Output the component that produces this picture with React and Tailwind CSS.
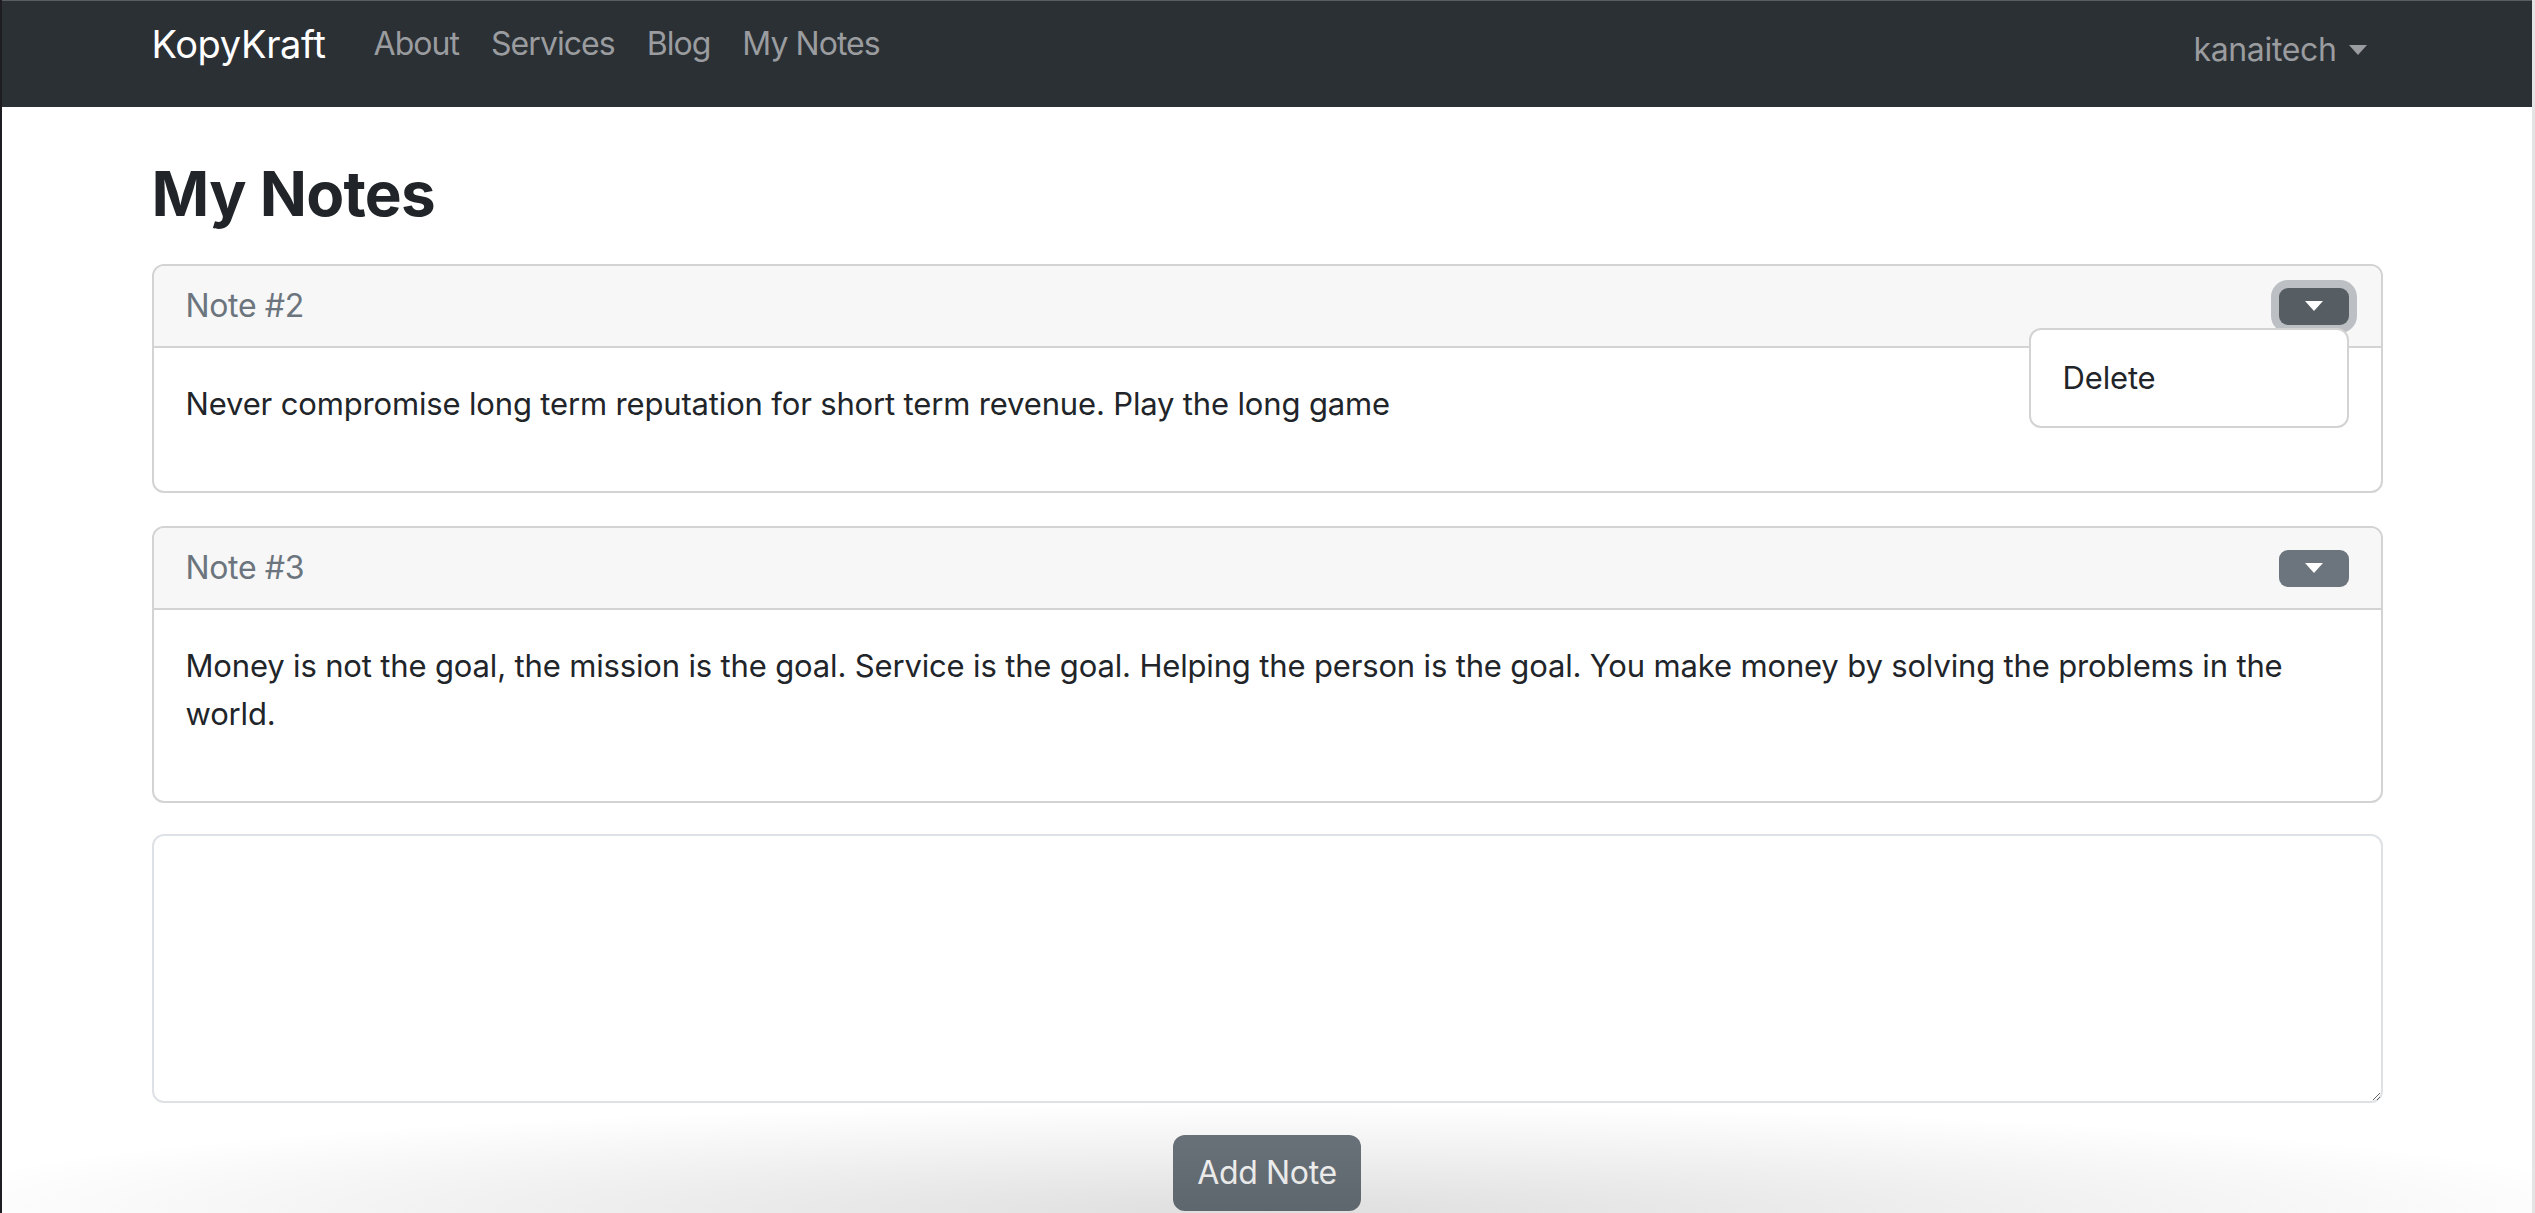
import { useState } from "react";

const notes = [
  {
    id: 2,
    text: "Never compromise long term reputation for short term revenue. Play the long game",
    open: true,
  },
  {
    id: 3,
    text: "Money is not the goal, the mission is the goal. Service is the goal. Helping the person is the goal. You make money by solving the problems in the world.",
    open: false,
  },
];

const Caret = ({ className }) => (
  <span
    className={`inline-block w-0 h-0 border-t-[10px] border-x-[9px] border-x-transparent ${className}`}
  />
);

const NoteCard = ({ note }) => {
  return (
    <div className="relative border-2 border-[#d3d3d3] rounded-[12px] bg-white">
      <div className="flex items-center justify-between h-[82px] px-[32px] bg-[#f7f7f7] border-b-2 border-[#d3d3d3] rounded-t-[10px]">
        <span className="text-[32px] leading-[48px] text-[#6c757d]">Note #{note.id}</span>
        <button
          className={`flex items-center justify-center w-[70px] h-[37px] rounded-[9px] ${
            note.open
              ? "bg-[#565e64] shadow-[0_0_0_8px_rgba(130,138,145,0.5)]"
              : "bg-[#6c757d]"
          }`}
        >
          <Caret className="border-t-white" />
        </button>
      </div>
      <div className="px-[32px] pt-[32px] pb-[63px]">
        <p className="text-[31px] leading-[48px] tracking-[-0.005em] text-[#212529]">{note.text}</p>
      </div>
      {note.open && (
        <div className="absolute right-[32px] top-[62px] w-[320px] bg-white border-2 border-[#d3d3d3] rounded-[12px] py-[16px] z-10">
          <div className="px-[32px] py-[8px] text-[31px] leading-[48px] tracking-[-0.005em] text-[#212529]">Delete</div>
        </div>
      )}
    </div>
  );
};

const App = () => {
  const [draft, setDraft] = useState("");

  return (
    <div className="relative h-[1213px] overflow-hidden bg-white border-l-2 border-[#1e1e22] border-r-[3px] border-r-[#e4e4e4] tracking-[-0.022em] font-['Inter','Liberation_Sans',sans-serif]">
      <nav className="h-[107px] bg-[#2b3035] border-t border-[#5a5d60]">
        <div className="w-[2231px] mx-auto flex justify-between">
          <div className="flex items-start">
            <span className="mt-[14px] text-[38px] leading-[58px] text-white mr-[32px]">KopyKraft</span>
            {["About", "Services", "Blog", "My Notes"].map((link) => (
              <a
                key={link}
                className="mt-[19px] px-[16px] text-[32px] leading-[48px] tracking-[-0.03em] text-[#9a9c9f]"
              >
                {link}
              </a>
            ))}
          </div>
          <div className="flex items-center mt-[25px] h-[48px] px-[16px] text-[32px] leading-[48px] text-[#9a9c9f]">
            kanaitech
            <Caret className="ml-[12px] border-t-[#9a9c9f]" />
          </div>
        </div>
      </nav>

      <main className="w-[2231px] mx-auto">
        <h1 className="mt-[49px] mb-[32px] text-[62px] leading-[76px] font-bold tracking-[-0.012em] text-[#212529]">My Notes</h1>

        <div className="flex flex-col gap-[33px]">
          {notes.map((note) => (
            <NoteCard key={note.id} note={note} />
          ))}
        </div>

        <textarea
          rows={5}
          value={draft}
          onChange={(e) => setDraft(e.target.value)}
          className="block w-full mt-[31px] h-[269px] border-2 border-[#dee2e6] rounded-[12px] px-[24px] py-[12px] text-[32px] leading-[48px] outline-none resize-y"
        />

        <div className="flex justify-center mt-[32px]">
          <button className="h-[76px] px-[24px] rounded-[12px] bg-[#6c757d] text-white text-[32px] leading-[48px]">
            Add Note
          </button>
        </div>
      </main>

      {/* window shadow at the bottom of the capture */}
      <div className="pointer-events-none absolute left-0 right-0 bottom-0 h-[110px] bg-[radial-gradient(ellipse_55%_100%_at_50%_100%,rgba(0,0,0,0.13),rgba(0,0,0,0)_100%)] z-20" />
    </div>
  );
};

export default App;
